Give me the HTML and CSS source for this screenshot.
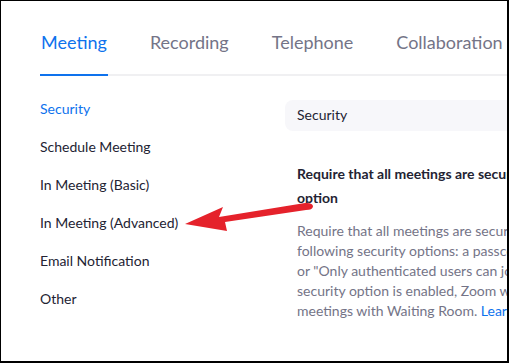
FILE: index.html
```html
<!DOCTYPE html>
<html>
<head>
<meta charset="utf-8">
<link rel="stylesheet" href="styles.css">
</head>
<body>
<div class="frame">
  <div class="tabs">
    <div class="tab active">Meeting</div>
    <div class="tab">Recording</div>
    <div class="tab">Telephone</div>
    <div class="tab">Collaboration</div>
  </div>
  <div class="body">
    <nav class="side">
      <div class="item active">Security</div>
      <div class="item">Schedule Meeting</div>
      <div class="item">In Meeting (Basic)</div>
      <div class="item">In Meeting (Advanced)</div>
      <div class="item">Email Notification</div>
      <div class="item">Other</div>
    </nav>
    <section class="content">
      <div class="section-title">Security</div>
      <div class="setting">
        <div class="setting-name">Require that all meetings are secured with one security<br>option</div>
        <div class="setting-desc">Require that all meetings are secured with one of the<br>following security options: a passcode, Waiting Room,<br>or "Only authenticated users can join meetings". If no<br>security option is enabled, Zoom will secure all<br>meetings with Waiting Room. <span class="link">Learn more</span></div>
      </div>
    </section>
  </div>
  <svg class="arrow" width="509" height="363" viewBox="0 0 509 363">
    <path d="M185,224 L223,207 L219,217 L305,203 Q313,202.5 313,206.5 Q312.5,210 306,210 L225,222 L227,231 Z" fill="#e5222b"/>
  </svg>
</div>
</body>
</html>
```
FILE: styles.css
```css
html, body {
  margin: 0;
  padding: 0;
  background: #fff;
}
.frame {
  position: relative;
  box-sizing: border-box;
  width: 509px;
  height: 363px;
  border-top: 1px solid #000;
  border-left: 1px solid #000;
  border-right: 2px solid #000;
  border-bottom: 2px solid #000;
  overflow: hidden;
  font-family: Lato, "Open Sans", sans-serif;
}
.tabs {
  display: flex;
  gap: 41px;
  margin-top: 29px;
  margin-left: 39px;
  padding-left: 0;
  border-bottom: 2px solid #f0f0f2;
  white-space: nowrap;
}
.tab {
  font-size: 18px;
  line-height: 24px;
  color: #747487;
  padding: 0 1px 20px 1px;
  margin-bottom: -2px;
  border-bottom: 2px solid transparent;
}
.tab.active {
  color: #0e72ed;
  border-bottom-color: #0e72ed;
}
.body {
  display: flex;
  margin-top: 14px;
  margin-left: 39px;
}
.side {
  width: 245px;
  flex: none;
}
.item {
  font-size: 14px;
  line-height: 38px;
  color: #232333;
  white-space: nowrap;
}
.item.active {
  color: #0e72ed;
}
.content {
  flex: none;
  width: 300px;
  padding-top: 10px;
}
.section-title {
  background: #f7f7fa;
  border-radius: 8px;
  height: 31px;
  line-height: 29px;
  padding-left: 12px;
  font-size: 14px;
  color: #232333;
}
.setting {
  padding-left: 12px;
  padding-top: 31px;
  white-space: nowrap;
}
.setting-name {
  font-size: 14px;
  font-weight: 700;
  line-height: 24px;
  color: #232333;
}
.setting-desc {
  margin-top: 11px;
  font-size: 14px;
  line-height: 20px;
  color: #747487;
}
.link {
  color: #0e72ed;
}
.arrow {
  position: absolute;
  left: -1px;
  top: -1px;
  pointer-events: none;
}
```
